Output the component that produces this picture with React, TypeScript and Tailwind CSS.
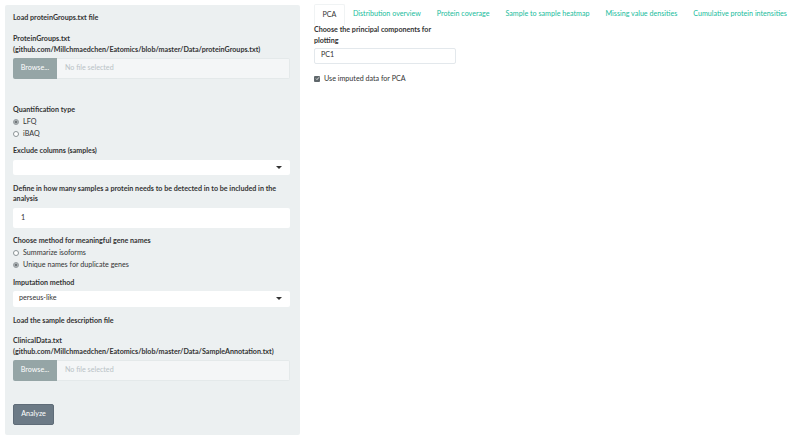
import React from "react";

const Label = ({ children, className = "" }: { children: React.ReactNode; className?: string }) => (
  <div className={"font-bold leading-[10.5px] text-[#333333] " + className}>{children}</div>
);

const Radio = ({ checked, label }: { checked?: boolean; label: string }) => (
  <div className="flex h-[12px] items-center">
    <span
      className={
        "relative mr-[4px] box-border h-[6px] w-[6px] rounded-full border " +
        (checked ? "border-[#9aa1a4] bg-[#aab0b3]" : "border-[#8a9396] bg-white")
      }
    >
      {checked && <span className="absolute left-[1px] top-[1px] h-[2px] w-[2px] rounded-full bg-[#5d6366]" />}
    </span>
    <span className="leading-[10.5px] text-[#333333]">{label}</span>
  </div>
);

const FileInput = () => (
  <div className="flex h-[21px] w-full">
    <div className="flex w-[44px] items-center justify-center rounded-l-[2px] bg-[#95a5a6] text-white">Browse...</div>
    <div className="flex flex-1 items-center rounded-r-[2px] border border-l-0 border-[#e4e9ea] bg-[#f4f6f7] pl-[8px] text-[#b9c2c6]">
      No file selected
    </div>
  </div>
);

const Caret = () => (
  <span className="ml-auto mr-[8px] h-0 w-0 border-l-[3px] border-r-[3px] border-t-[3px] border-l-transparent border-r-transparent border-t-[#333333]" />
);

const Select = ({ value }: { value?: string }) => (
  <div className="flex h-[15.5px] w-full items-center rounded-[2px] bg-white pl-[6px] text-[#333333]">
    <span>{value}</span>
    <Caret />
  </div>
);

export default function App() {
  const tabs = [
    "Distribution overview",
    "Protein coverage",
    "Sample to sample heatmap",
    "Missing value densities",
    "Cumulative protein intensities",
  ];
  return (
    <div
      className="flex h-[443px] w-[800px] bg-white text-[7.15px] text-[#333333]"
      style={{ fontFamily: "Lato, 'Open Sans', sans-serif" }}
    >
      <div className="ml-[5px] mt-[5px] box-border flex h-[430px] w-[295px] shrink-0 flex-col rounded-[2px] bg-[#ecf0f1] pl-[8px] pr-[10px] pt-[8px]">
        <Label>Load proteinGroups.txt file</Label>
        <Label className="mt-[10.5px]">
          ProteinGroups.txt
          <br />
          (github.com/Millchmaedchen/Eatomics/blob/master/Data/proteinGroups.txt)
        </Label>
        <div className="mt-[2.5px]">
          <FileInput />
        </div>
        <Label className="mt-[26px]">Quantification type</Label>
        <div className="mt-[1px]">
          <Radio checked label="LFQ" />
          <Radio label="iBAQ" />
        </div>
        <Label className="mt-[6px]">Exclude columns (samples)</Label>
        <div className="mt-[3px]">
          <Select />
        </div>
        <Label className="mt-[8.5px]">
          Define in how many samples a protein needs to be detected in to be included in the analysis
        </Label>
        <div className="mt-[3.5px] flex h-[20px] items-center rounded-[2px] bg-white pl-[8px]">1</div>
        <Label className="mt-[7.5px]">Choose method for meaningful gene names</Label>
        <div className="mt-[1px]">
          <Radio label="Summarize isoforms" />
          <Radio checked label="Unique names for duplicate genes" />
        </div>
        <Label className="mt-[6.5px]">Imputation method</Label>
        <div className="mt-[3px]">
          <Select value="perseus-like" />
        </div>
        <Label className="mt-[9.5px]">Load the sample description file</Label>
        <Label className="mt-[9.5px]">
          ClinicalData.txt
          <br />
          (github.com/Millchmaedchen/Eatomics/blob/master/Data/SampleAnnotation.txt)
        </Label>
        <div className="mt-[2.5px]">
          <FileInput />
        </div>
        <div className="mt-[23px] flex h-[21px] w-[41px] items-center justify-center rounded-[2px] border border-[#5f6c78] bg-[#6c7a86] text-white">
          Analyze
        </div>
      </div>

      <div className="ml-[14px] mt-[4px] flex flex-1 flex-col">
        <div className="flex h-[21px] items-stretch whitespace-nowrap">
          <div className="flex items-center rounded-t-[2px] border border-b-0 border-[#f0f3f4] bg-white px-[7.5px] text-[#333333]">
            PCA
          </div>
          {tabs.map((t) => (
            <div key={t} className="flex items-center px-[8px] text-[#18bc9c]">
              {t}
            </div>
          ))}
        </div>
        <Label className="mt-[0px] w-[130px]">Choose the principal components for plotting</Label>
        <div className="mt-[1.5px] box-border flex h-[16px] w-[142px] items-center rounded-[2px] border border-[#e3e8ec] bg-white pl-[6px]">
          PC1
        </div>
        <div className="mt-[10px] flex items-center">
          <span className="mr-[4px] flex h-[6px] w-[6px] items-center justify-center rounded-[1px] bg-[#5f676b]">
            <svg width="5" height="5" viewBox="0 0 5 5">
              <path d="M1 2.6 L2 3.6 L4 1.3" stroke="white" strokeWidth="0.8" fill="none" />
            </svg>
          </span>
          <span className="leading-[10.5px]">Use imputed data for PCA</span>
        </div>
      </div>
    </div>
  );
}
